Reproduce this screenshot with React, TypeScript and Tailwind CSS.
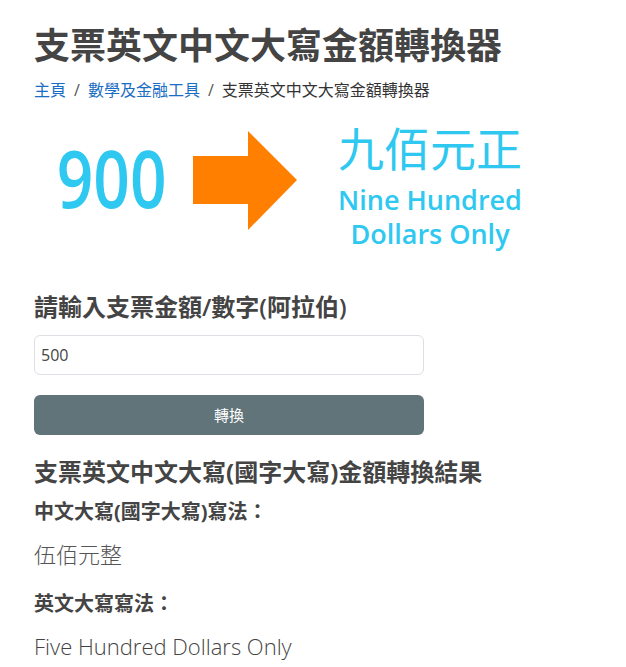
import { useState } from "react";

const font = { fontFamily: '"Open Sans", "Noto Sans CJK TC", sans-serif' };

// 示意圖：900 → 九佰元正
const Banner = () => (
  <div className="flex items-start h-[140px] mt-[16px]">
    <div className="w-[156px] flex justify-center mt-[19px]">
      <span className="text-[80px] leading-[80px] font-semibold text-[#2ec8f0] scale-x-[0.8] inline-block">900</span>
    </div>
    <svg width="104" height="100" viewBox="0 0 104 100" className="ml-[3px] mt-[13px]">
      <polygon points="0,25 55,25 55,0 104,49 55,99 55,73 0,73" fill="#ff8000" />
    </svg>
    <div className="w-[266px] flex flex-col items-center text-[#2ec8f0] mt-[4px]">
      <div className="text-[46px] leading-[52px]">九佰元正</div>
      <div className="text-[27px] leading-[34px] mt-[9px] font-semibold">Nine Hundred</div>
      <div className="text-[27px] leading-[34px] font-semibold">Dollars Only</div>
    </div>
  </div>
);

export default function App() {
  const [value, setValue] = useState("500");

  return (
    <div className="min-h-screen bg-white px-[34px] text-[#444]" style={font}>
      <h1 className="pt-[24px] text-[36px] leading-[44px] font-semibold text-[#444]">支票英文中文大寫金額轉換器</h1>

      <nav className="mt-[10px] text-[16px] leading-[24px] flex items-center">
        <a className="text-[#1a6dc4]">主頁</a>
        <span className="px-[8px] text-[#555]">/</span>
        <a className="text-[#1a6dc4]">數學及金融工具</a>
        <span className="px-[8px] text-[#555]">/</span>
        <span className="text-[#333]">支票英文中文大寫金額轉換器</span>
      </nav>

      <Banner />

      <h4 className="mt-[34px] text-[24px] leading-[30px] font-semibold text-[#444]">請輸入支票金額/數字(阿拉伯)</h4>

      <input
        value={value}
        onChange={(e) => setValue(e.target.value)}
        className="mt-[13px] block w-[390px] h-[40px] border border-[#dcdfe3] rounded-[6px] px-[6px] text-[16px] text-[#444] outline-none"
      />

      <button className="mt-[20px] block w-[390px] h-[40px] rounded-[6px] bg-[#607479] text-white text-[15px]">轉換</button>

      <h4 className="mt-[22px] text-[24px] leading-[30px] font-bold text-[#444]">支票英文中文大寫(國字大寫)金額轉換結果</h4>

      <div className="mt-[11px] text-[20px] leading-[28px] font-bold text-[#444]">中文大寫(國字大寫)寫法：</div>
      <div className="mt-[13px] text-[22px] leading-[30px] font-light text-[#555]">伍佰元整</div>

      <div className="mt-[21px] text-[20px] leading-[28px] font-bold text-[#444]">英文大寫寫法：</div>
      <div className="mt-[13px] text-[22px] leading-[30px] font-light text-[#444]">Five Hundred Dollars Only</div>
    </div>
  );
}
